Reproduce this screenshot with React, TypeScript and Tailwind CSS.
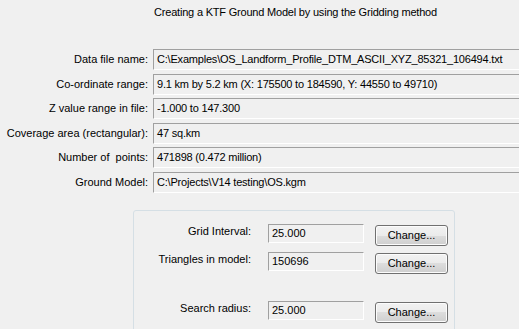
import React from 'react'

const rows: [string, string][] = [
  ['Data file name:', 'C:\\Examples\\OS_Landform_Profile_DTM_ASCII_XYZ_85321_106494.txt'],
  ['Co-ordinate range:', '9.1 km by 5.2 km (X: 175500 to 184590, Y: 44550 to 49710)'],
  ['Z value range in file:', '-1.000 to 147.300'],
  ['Coverage area (rectangular):', '47 sq.km'],
  ['Number of  points:', '471898 (0.472 million)'],
  ['Ground Model:', 'C:\\Projects\\V14 testing\\OS.kgm'],
]

const sunken =
  'border border-t-[#a0a0a0] border-l-[#a0a0a0] border-b-white border-r-white'

function ChangeButton() {
  return (
    <button
      type="button"
      className="ml-[11px] h-[21px] w-[73px] rounded-[3px] border border-[#707070] bg-[linear-gradient(to_bottom,#f2f2f2_0%,#ebebeb_50%,#dddddd_50%,#cfcfcf_100%)] text-[11px] leading-[19px] text-black shadow-[inset_0_0_0_1px_#fcfcfc]"
    >
      Change...
    </button>
  )
}

function GridRow({ label, value, className }: { label: string; value: string; className?: string }) {
  return (
    <div className={'flex items-start ' + (className ?? '')}>
      <div className="w-[117px] pt-[1px] text-right leading-[13px]">{label}</div>
      <div className={'ml-[17px] h-[19px] w-[96px] pl-[3px] leading-[17px] ' + sunken}>{value}</div>
      <div className="mt-[1px]">
        <ChangeButton />
      </div>
    </div>
  )
}

export default function App() {
  return (
    <div
      className="h-[329px] w-[519px] overflow-hidden bg-[#f0f0f0] text-[11px] text-black"
      style={{ fontFamily: '"Liberation Sans", Arial, sans-serif' }}
    >
      <div className="pl-[72px] pt-[5px] text-center leading-[14px] tracking-[-0.2px]">
        Creating a KTF Ground Model by using the Gridding method
      </div>

      <div className="mt-[30px] flex flex-col gap-[3.6px]">
        {rows.map(([label, value]) => (
          <div key={label} className="flex items-center">
            <div className="w-[148px] shrink-0 whitespace-pre text-right leading-[13px]">{label}</div>
            <div
              className={
                'ml-[5px] h-[21px] w-[400px] shrink-0 whitespace-nowrap pl-[3px] leading-[19px] tracking-[-0.2px] ' +
                sunken
              }
            >
              {value}
            </div>
          </div>
        ))}
      </div>

      <div className="ml-[133px] mt-[17px] h-[140px] w-[322px] rounded-[3px] border border-[#d5dfe5] pt-[13px]">
        <GridRow label="Grid Interval:" value="25.000" />
        <GridRow label="Triangles in model:" value="150696" className="mt-[6px]" />
        <GridRow label="Search radius:" value="25.000" className="mt-[27px]" />
      </div>
    </div>
  )
}
